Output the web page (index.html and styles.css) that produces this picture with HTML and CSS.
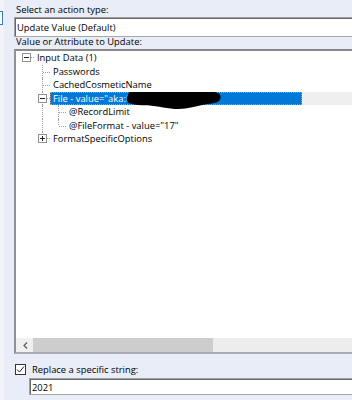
FILE: index.html
```html
<!DOCTYPE html>
<html>
<head>
<meta charset="utf-8">
<link rel="stylesheet" href="styles.css">
</head>
<body>
<div class="page">
  <div class="side">
    <div class="side-box"></div>
  </div>
  <div class="main">
    <div class="label first">Select an action type:</div>
    <div class="select">Update Value (Default)</div>
    <div class="label second">Value or Attribute to Update:</div>
    <div class="treebox">
      <div class="tree">
        <div class="row">
          <span class="cell stub-r"><svg class="exp" width="9" height="9" viewBox="0 0 9 9"><rect x="0.5" y="0.5" width="8" height="8" fill="#fff" stroke="#919191"/><path d="M2 4.5H7" stroke="#222"/></svg></span>
          <span class="text">Input Data (1)</span>
        </div>
        <div class="row">
          <span class="cell"></span>
          <span class="cell vline hline"></span>
          <span class="text">Passwords</span>
        </div>
        <div class="row">
          <span class="cell"></span>
          <span class="cell vline hline"></span>
          <span class="text">CachedCosmeticName</span>
        </div>
        <div class="row">
          <span class="cell"></span>
          <span class="cell vline stub-r"><svg class="exp" width="9" height="9" viewBox="0 0 9 9"><rect x="0.5" y="0.5" width="8" height="8" fill="#fff" stroke="#919191"/><path d="M2 4.5H7" stroke="#222"/></svg></span>
          <span class="text selected">File - value="aka:F<svg class="redact" width="107" height="19" viewBox="0 0 118 20" preserveAspectRatio="none"><path d="M4 0 L98 0 C104 1 106 5 103 9 C100 12 94 12 88 13 C78 15 68 18 58 18 C46 18 36 15 24 14 C14 14 6 13 2 11 C0 8 1 3 4 0 Z" fill="#000"/></svg></span>
          <span class="fill"></span>
        </div>
        <div class="row">
          <span class="cell"></span>
          <span class="cell vline"></span>
          <span class="cell vline hline"></span>
          <span class="text">@RecordLimit</span>
        </div>
        <div class="row">
          <span class="cell"></span>
          <span class="cell vline"></span>
          <span class="cell lline hline"></span>
          <span class="text">@FileFormat - value="17"</span>
        </div>
        <div class="row">
          <span class="cell"></span>
          <span class="cell lline stub-r"><svg class="exp" width="9" height="9" viewBox="0 0 9 9"><rect x="0.5" y="0.5" width="8" height="8" fill="#fff" stroke="#919191"/><path d="M2 4.5H7M4.5 2V7" stroke="#222"/></svg></span>
          <span class="text">FormatSpecificOptions</span>
        </div>
      </div>
      <div class="hscroll">
        <span class="arrow"><svg width="5" height="7" viewBox="0 0 5 7"><path d="M4 0.5 L1 3.5 L4 6.5" fill="none" stroke="#606060" stroke-width="1.3"/></svg></span>
        <span class="thumb"></span>
        <span class="track"></span>
      </div>
    </div>
    <div class="check-row">
      <span class="checkbox"><svg width="9" height="9" viewBox="0 0 9 9"><path d="M1 4.5 L3.5 7 L8 1.5" fill="none" stroke="#222" stroke-width="1"/></svg></span>
      <span class="check-label">Replace a specific string:</span>
    </div>
    <div class="input">2021</div>
  </div>
</div>
</body>
</html>
```

FILE: styles.css
```css
html, body {
  margin: 0;
  padding: 0;
  overflow: hidden;
}

body {
  width: 352px;
  height: 400px;
  background: #e8edf8;
  font-family: "Open Sans", "Segoe UI", sans-serif;
  font-size: 9.4px;
  color: #000;
}

.page {
  display: flex;
  height: 400px;
}

.side {
  flex: none;
  width: 4px;
  background: #f1f3f9;
}

.side-box {
  margin-top: 11px;
  width: 2px;
  height: 12px;
  background: #fff;
  border: 1px solid #2f7cd1;
  border-left: none;
}

.main {
  flex: none;
  width: 400px;
  padding-left: 10px;
}

.label {
  padding-left: 2px;
  white-space: nowrap;
}

.label.first {
  height: 12px;
  line-height: 12px;
  padding-top: 4px;
  padding-bottom: 1px;
}

.label.second {
  height: 12px;
  line-height: 10px;
}

.select {
  box-sizing: content-box;
  height: 17px;
  line-height: 17px;
  padding-top: 1px;
  padding-left: 2px;
  background: #fff;
  border-top: 1px solid #a0a0a0;
  border-left: 1px solid #a0a0a0;
  border-bottom: 1px solid #a8a8a8;
  box-shadow: inset 1px 1px 0 #696969;
}

.treebox {
  display: flex;
  flex-direction: column;
  height: 301px;
  background: #fff;
  border-top: 2px solid #8a8a8a;
  border-left: 2px solid #8f929b;
  border-bottom: 2px solid #a9acb4;
}

.tree {
  flex: 1;
  padding-left: 2px;
}

.row {
  display: flex;
  align-items: center;
  height: 13.5px;
  white-space: nowrap;
}

.cell {
  position: relative;
  flex: none;
  width: 16px;
  height: 100%;
}

.cell .exp {
  position: absolute;
  left: 4px;
  top: 2px;
  z-index: 2;
}

.vline::before,
.lline::before {
  content: "";
  position: absolute;
  left: 8px;
  top: 0;
  bottom: 0;
  border-left: 1px dotted #a0a0a0;
}

.lline::before {
  bottom: 50%;
}

.hline::after {
  content: "";
  position: absolute;
  left: 9px;
  right: 0;
  top: 7px;
  border-top: 1px dotted #a0a0a0;
}

.stub-r::after {
  content: "";
  position: absolute;
  left: 13px;
  right: 0;
  top: 6px;
  border-top: 1px dotted #a0a0a0;
}

.text {
  position: relative;
  height: 13px;
  line-height: 13px;
  padding: 0 2px;
  border-left: 1px solid transparent;
}

.selected {
  box-sizing: border-box;
  width: 252px;
  background: #0078d7;
  color: #fff;
  border: 1px dotted #ff8728;
  line-height: 11px;
}

.redact {
  position: absolute;
  left: 75px;
  top: -1px;
}

.fill {
  flex: 1;
  height: 13px;
  background: #efefef;
}

.hscroll {
  display: flex;
  height: 14px;
  background: #f0f0f0;
}

.arrow {
  flex: none;
  box-sizing: border-box;
  width: 16px;
  padding-left: 2px;
  display: flex;
  align-items: center;
  justify-content: center;
}

.thumb {
  flex: none;
  width: 180px;
  margin-left: 1px;
  background: #cdcdcd;
}

.track {
  flex: 1;
  background: #ededed;
}

.check-row {
  display: flex;
  align-items: center;
  height: 11px;
  margin-top: 10px;
  margin-left: 1px;
}

.checkbox {
  flex: none;
  box-sizing: border-box;
  width: 11px;
  height: 11px;
  border: 1px solid #333;
  background: #fff;
  display: flex;
  align-items: center;
  justify-content: center;
}

.check-label {
  margin-left: 6px;
  line-height: 11px;
  white-space: nowrap;
}

.input {
  margin-top: 3px;
  margin-left: 15px;
  height: 13px;
  line-height: 13px;
  padding-top: 2px;
  padding-left: 2px;
  background: #fff;
  border-top: 1px solid #a0a0a0;
  border-left: 1px solid #a0a0a0;
  border-bottom: 1px solid #a8a8a8;
  box-shadow: inset 1px 1px 0 #696969;
}
```
